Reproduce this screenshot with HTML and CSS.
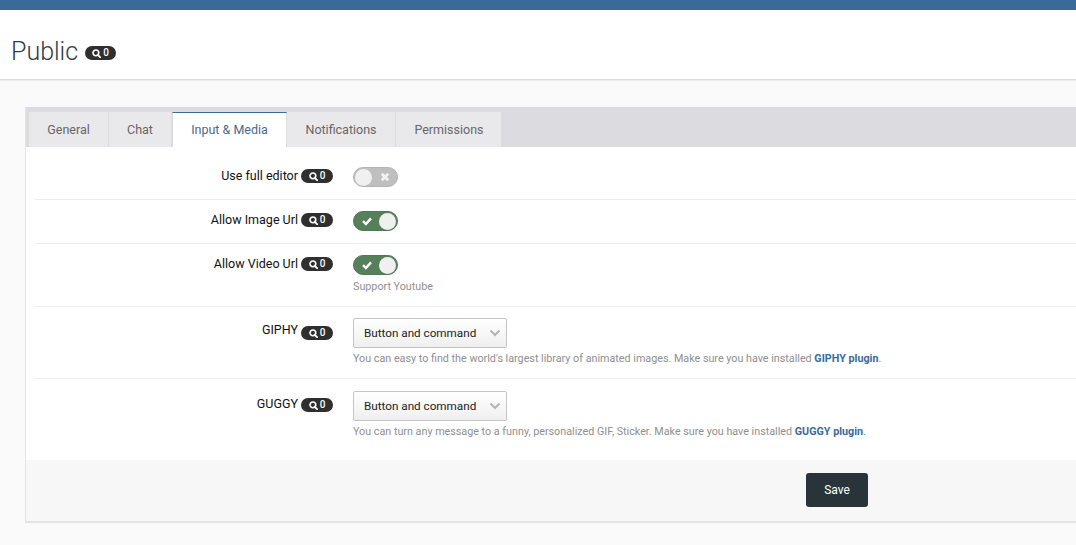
FILE: index.html
```html
<!DOCTYPE html>
<html lang="en">
<head>
<meta charset="utf-8">
<title>Public</title>
<link rel="stylesheet" href="styles.css">
</head>
<body>
<svg class="sprites" width="0" height="0" aria-hidden="true">
  <symbol id="search" viewBox="0 0 10 10"><circle cx="4.3" cy="4.3" r="3.2" fill="none" stroke="currentColor" stroke-width="1.8"/><path d="M6.5 6.5 9.2 9.2" stroke="currentColor" stroke-width="2" stroke-linecap="round"/></symbol>
  <symbol id="check" viewBox="0 0 10 10"><path d="M1 5.2 3.9 8 9 2.4" fill="none" stroke="currentColor" stroke-width="2.4"/></symbol>
  <symbol id="cross" viewBox="0 0 10 10"><path d="M1.8 1.8 8.2 8.2M8.2 1.8 1.8 8.2" fill="none" stroke="currentColor" stroke-width="2.8"/></symbol>
</svg>
<div class="topbar"></div>
<header class="page-head">
  <h1>Public</h1>
  <span class="badge badge-head"><svg class="ico"><use href="#search"/></svg>0</span>
</header>
<main class="content">
  <section class="card">
    <nav class="tabs">
      <a class="tab tab-general">General</a>
      <a class="tab tab-chat">Chat</a>
      <a class="tab tab-active">Input &amp; Media</a>
      <a class="tab tab-notif">Notifications</a>
      <a class="tab tab-perm">Permissions</a>
    </nav>
    <form class="form">
      <div class="row row-first">
        <div class="label"><span class="label-text">Use full editor</span><span class="badge"><svg class="ico"><use href="#search"/></svg>0</span></div>
        <div class="field">
          <div class="switch"><span class="knob"></span><svg class="sw-ico"><use href="#cross"/></svg></div>
        </div>
      </div>
      <div class="row row-a">
        <div class="label"><span class="label-text">Allow Image Url</span><span class="badge"><svg class="ico"><use href="#search"/></svg>0</span></div>
        <div class="field">
          <div class="switch on"><svg class="sw-ico"><use href="#check"/></svg><span class="knob"></span></div>
        </div>
      </div>
      <div class="row row-b">
        <div class="label"><span class="label-text">Allow Video Url</span><span class="badge"><svg class="ico"><use href="#search"/></svg>0</span></div>
        <div class="field">
          <div class="switch on"><svg class="sw-ico"><use href="#check"/></svg><span class="knob"></span></div>
          <p class="help help-sw">Support Youtube</p>
        </div>
      </div>
      <div class="row row-c">
        <div class="label"><span class="label-text">GIPHY</span><span class="badge"><svg class="ico"><use href="#search"/></svg>0</span></div>
        <div class="field">
          <div class="select">Button and command<svg class="chev" viewBox="0 0 12 8"><path d="M1.5 1.5 6 6l4.5-4.5" fill="none" stroke="currentColor" stroke-width="2"/></svg></div>
          <p class="help">You can easy to find the world's largest library of animated images. Make sure you have installed <a class="link">GIPHY plugin</a>.</p>
        </div>
      </div>
      <div class="row row-d">
        <div class="label"><span class="label-text">GUGGY</span><span class="badge"><svg class="ico"><use href="#search"/></svg>0</span></div>
        <div class="field">
          <div class="select">Button and command<svg class="chev" viewBox="0 0 12 8"><path d="M1.5 1.5 6 6l4.5-4.5" fill="none" stroke="currentColor" stroke-width="2"/></svg></div>
          <p class="help">You can turn any message to a funny, personalized GIF, Sticker. Make sure you have installed <a class="link">GUGGY plugin</a>.</p>
        </div>
      </div>
    </form>
    <footer class="actions"><button class="save" type="button">Save</button></footer>
  </section>
</main>
</body>
</html>
```
FILE: styles.css
```css
* { box-sizing: border-box; }
html, body { margin: 0; height: 100%; }
body {
  font-family: Roboto, "Liberation Sans", sans-serif;
  font-size: 12.5px;
  color: #111;
  background: #fafafa;
  overflow: hidden;
}
.sprites { display: block; height: 0; }
.topbar { height: 10px; background: #3a6a9a; }
.page-head {
  height: 70px;
  background: #fff;
  border-bottom: 1px solid #dcdcdc;
  box-shadow: 0 1px 1px #ececec;
  display: flex;
  align-items: center;
  padding: 15px 0 0 11px;
}
h1 {
  margin: 0 7px 0 0;
  font-size: 25px;
  font-weight: 300;
  color: #2f3a44;
  line-height: 30px;
}
.badge {
  display: inline-flex;
  align-items: center;
  justify-content: center;
  gap: 2px;
  width: 32px;
  height: 14px;
  border-radius: 7px;
  background: #2f2f2f;
  color: #fff;
  font-size: 10px;
  font-weight: 500;
  line-height: 14px;
}
.badge-head { width: 31px; margin-top: 2px; }
.ico { width: 9px; height: 9px; }
.content { padding: 27px 0 0 25px; }
.card {
  width: 1100px;
  border: 1px solid #e3e3e3;
  border-bottom-width: 2px;
  border-top: 0;
  background: #fff;
}
.tabs {
  height: 40px;
  background: #dcdce0;
  padding: 5px 0 0 3px;
  display: flex;
}
.tab {
  height: 35px;
  background: #e9e9ec;
  color: #666;
  font-size: 12.5px;
  line-height: 35px;
  text-align: center;
  border-right: 1px solid #dcdce0;
}
.tab-general { width: 80px; }
.tab-chat { width: 63px; }
.tab-active {
  width: 115px;
  background: #fff;
  color: #4a6a8c;
  border-top: 1px solid #3a6a9a;
  border-left: 1px solid #dcdce0;
  border-right: 1px solid #dcdce0;
  line-height: 33px;
}
.tab-notif { width: 109px; border-left: 0; }
.tab-perm { width: 105px; border-right: 0; padding-left: 1px; }
.form { padding: 0 0 0 9px; background: #fff; }
.row {
  display: flex;
  border-bottom: 1px solid #eeeeee;
}
.row-first { height: 53px; padding-top: 20px; }
.row-a { height: 44px; padding-top: 11px; }
.row-b { height: 63px; padding-top: 11px; }
.row-c { height: 72px; padding-top: 11px; }
.row-d { height: 81px; padding-top: 12px; border-bottom: 0; }
.label {
  width: 298px;
  display: flex;
  justify-content: flex-end;
  align-items: flex-start;
  gap: 3px;
  line-height: 16px;
}
.label .badge { margin-top: 2px; }
.label-text { margin-top: 1px; }
.row-c .label { padding-top: 3px; }
.row-c .label-text { margin-top: 1px; }
.row-c .label .badge { margin-top: 5px; }
.row-d .label { padding-top: 5px; }
.row-d .label-text { margin-top: 0; }
.row-d .label .badge { margin-top: 2px; }
.field { margin-left: 20px; }
.switch {
  width: 45px;
  height: 20px;
  border-radius: 10px;
  background: #bfbfbf;
  border: 1px solid #b5b5b5;
  display: flex;
  align-items: center;
  padding: 0 1px;
  color: #f2f2f2;
}
.switch.on {
  background: #56805a;
  border-color: #4f7a54;
  justify-content: flex-end;
  color: #fff;
}
.knob {
  width: 17px;
  height: 17px;
  border-radius: 50%;
  background: #f0f0f0;
}
.sw-ico { width: 10px; height: 10px; margin-left: 8px; }
.on .sw-ico { margin: 0 7px 0 0; }
.help {
  margin: 0;
  font-size: 10.75px;
  line-height: 14px;
  color: #8f8f8f;
  white-space: nowrap;
}
.help-sw { margin-top: 5px; }
.select {
  width: 154px;
  height: 30px;
  border: 1px solid #c4c4c4;
  border-radius: 2px;
  background: linear-gradient(#ffffff, #efefef);
  color: #222;
  font-size: 11.7px;
  line-height: 30px;
  padding-left: 10px;
  display: flex;
  align-items: center;
  justify-content: space-between;
  padding-right: 5px;
}
.chev { width: 12px; height: 8px; color: #b4b4b4; }
.select + .help { margin-top: 4px; }
.link { color: #3a6a9a; font-weight: 700; }
.actions {
  height: 61px;
  background: #f7f7f7;
  padding: 13px 0 0 780px;
}
.save {
  display: block;
  width: 62px;
  height: 34px;
  border: 0;
  border-radius: 3px;
  background: #29333a;
  color: #fff;
  font-family: inherit;
  font-size: 12px;
}
```
